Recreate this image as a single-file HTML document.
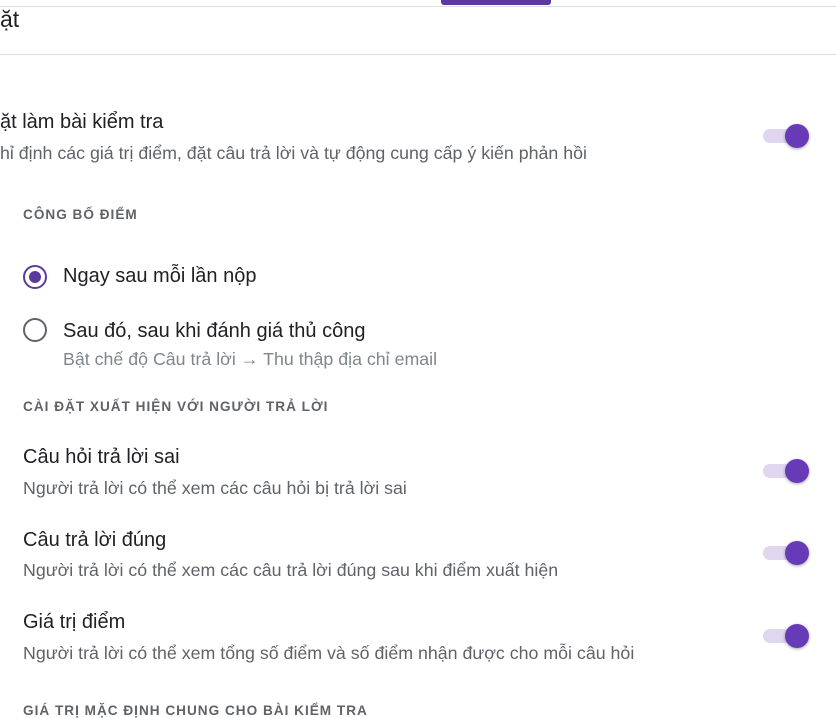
<!DOCTYPE html><html><head><meta charset="utf-8"><style>
body{margin:0;width:836px;height:715px;overflow:hidden;background:#fff;font-family:"Liberation Sans",sans-serif;position:relative;color:#202124}
.a{position:absolute;white-space:nowrap}
.t{font-size:20px;color:#202124}
.d{font-size:17.8px;color:#5f6368}
.h{font-size:13.6px;font-weight:bold;letter-spacing:1px;color:#5f6368}
.tg{position:absolute;width:36px;height:14px;border-radius:7px;background:#e0d6f0;left:763px}
.tg:after{content:"";position:absolute;right:-10px;top:-5px;width:24px;height:24px;border-radius:50%;background:#673ab7;box-shadow:0 1px 3px rgba(0,0,0,.35)}
.r{position:absolute;left:23px;width:24px;height:24px;border-radius:50%;box-sizing:border-box;border:2px solid #5f6368}
</style></head><body>
<div class="a" style="left:0;top:6px;width:836px;height:1px;background:#dadce0"></div>
<div class="a" style="left:441px;top:0;width:110px;height:5px;background:#5b3a9e;border-radius:0 0 3px 3px"></div>
<div class="a" style="left:0;top:6px;font-size:23px;color:#202124">ặt</div>
<div class="a" style="left:0;top:54px;width:836px;height:1px;background:#dadce0"></div>
<div class="a t" style="left:0;top:111px">ặt làm bài kiểm tra</div>
<div class="a d" style="left:0;top:143px">hỉ định các giá trị điểm, đặt câu trả lời và tự động cung cấp ý kiến phản hồi</div>
<div class="tg" style="top:129px"></div>
<div class="a h" style="left:23px;top:207px">CÔNG BỐ ĐIỂM</div>
<div class="r" style="top:265px;border-color:#5b3a9e"><div style="position:absolute;left:4px;top:4px;width:12px;height:12px;border-radius:50%;background:#5b3a9e"></div></div>
<div class="a t" style="left:63px;top:265px">Ngay sau mỗi lần nộp</div>
<div class="r" style="top:318px"></div>
<div class="a t" style="left:63px;top:320px">Sau đó, sau khi đánh giá thủ công</div>
<div class="a d" style="left:63px;top:349px;color:#80868b">Bật chế độ Câu trả lời → Thu thập địa chỉ email</div>
<div class="a h" style="left:23px;top:399px">CÀI ĐẶT XUẤT HIỆN VỚI NGƯỜI TRẢ LỜI</div>
<div class="a t" style="left:23px;top:446px">Câu hỏi trả lời sai</div>
<div class="a d" style="left:23px;top:478px">Người trả lời có thể xem các câu hỏi bị trả lời sai</div>
<div class="tg" style="top:464px"></div>
<div class="a t" style="left:23px;top:529px">Câu trả lời đúng</div>
<div class="a d" style="left:23px;top:560px">Người trả lời có thể xem các câu trả lời đúng sau khi điểm xuất hiện</div>
<div class="tg" style="top:546px"></div>
<div class="a t" style="left:23px;top:611px">Giá trị điểm</div>
<div class="a d" style="left:23px;top:643px">Người trả lời có thể xem tổng số điểm và số điểm nhận được cho mỗi câu hỏi</div>
<div class="tg" style="top:629px"></div>
<div class="a h" style="left:23px;top:703px">GIÁ TRỊ MẶC ĐỊNH CHUNG CHO BÀI KIỂM TRA</div>
</body></html>
